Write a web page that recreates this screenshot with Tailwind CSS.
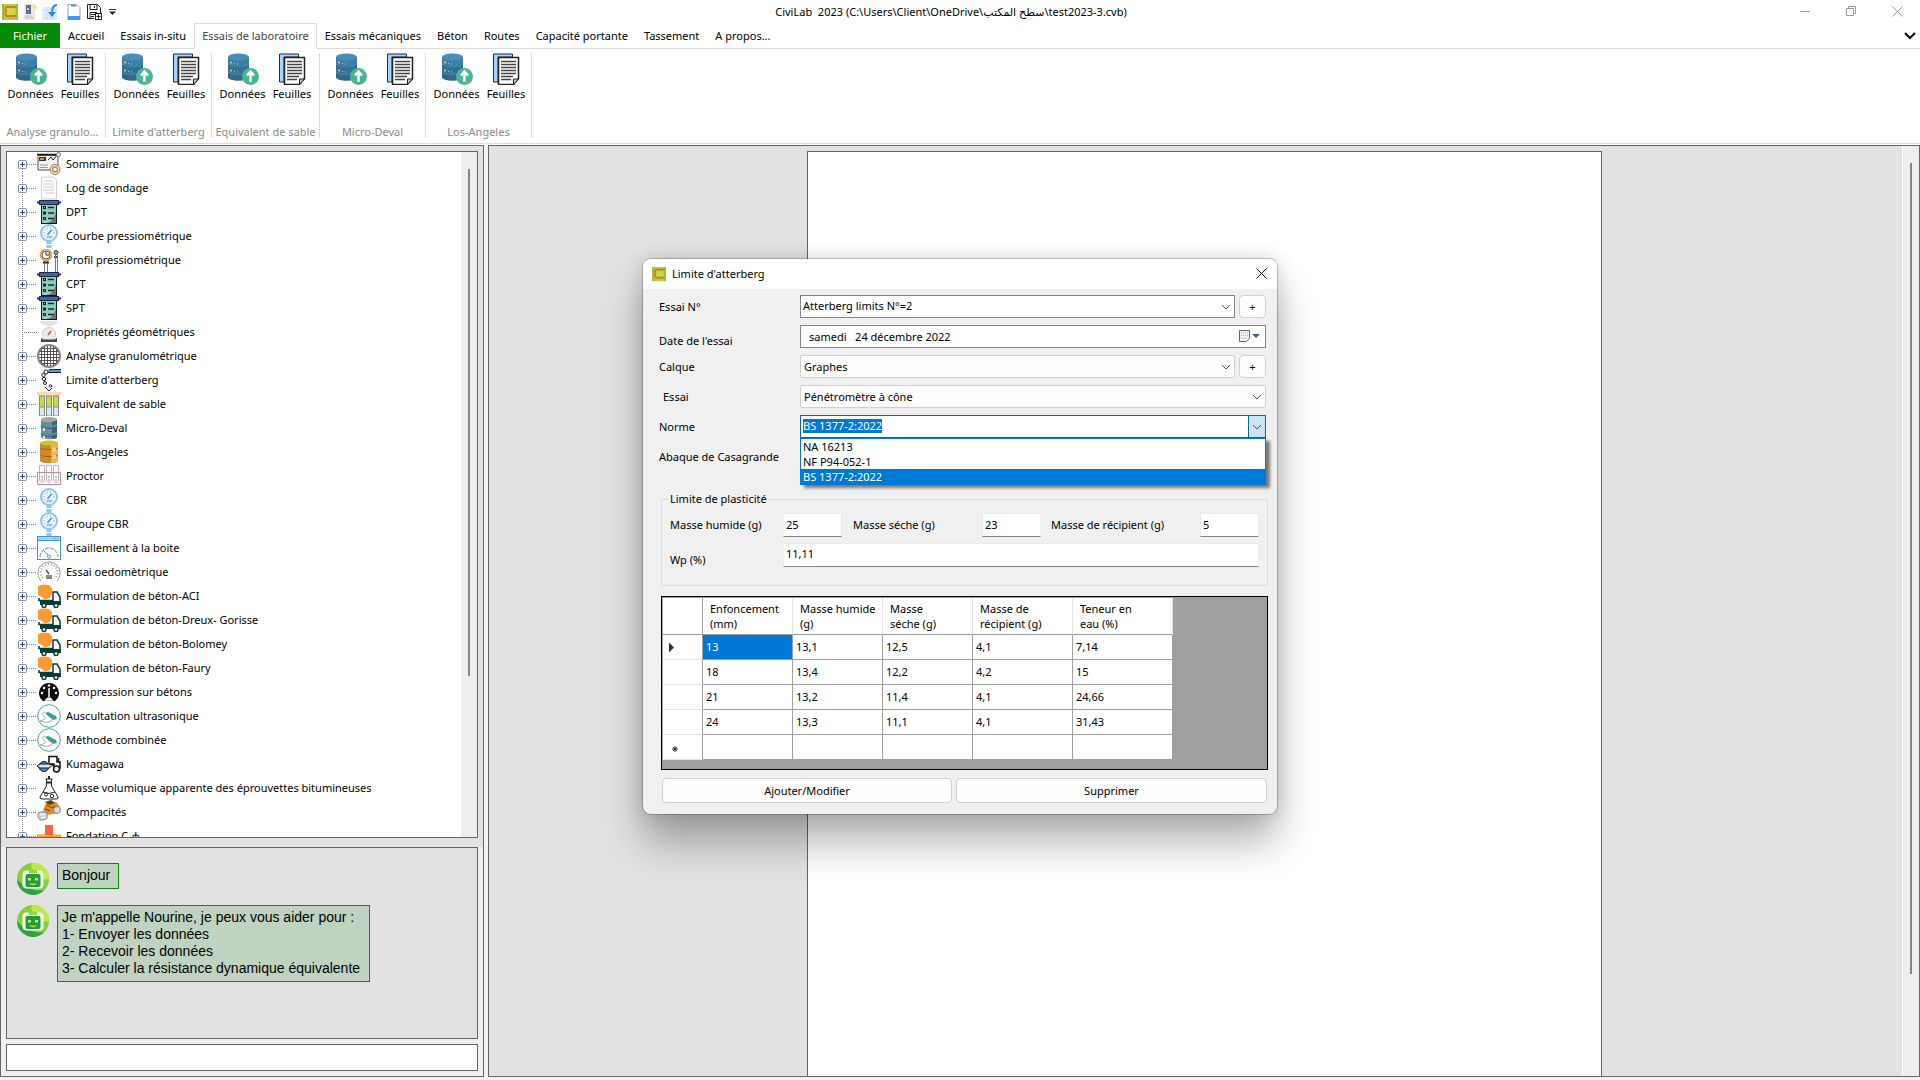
<!DOCTYPE html>
<html lang="fr">
<head>
<meta charset="utf-8">
<title>CiviLab 2023</title>
<script src="https://cdn.jsdelivr.net/npm/@tailwindcss/browser@4"></script>
</head>
<body class="flex h-screen flex-col overflow-hidden bg-white font-['Noto_Sans','DejaVu_Sans',sans-serif] text-[11px] leading-[14px] text-black">

<!-- Icon library -->
<svg class="hidden" aria-hidden="true">
  <symbol id="app" viewBox="0 0 16 16"><rect width="16" height="16" fill="#a6d62f"/><path d="M0 0h2v16H0zM14 0h2v16h-2z" fill="#8fc43a"/><path d="M5 4h8v7H5z" fill="#c8dc3c"/><path d="M14 3H5.500Q3.500 3 3.500 5v5q0 2 2 2H14" fill="none" stroke="#f2643c" stroke-width="2"/></symbol>
  <symbol id="data" viewBox="0 0 32 32"><path d="M1 4v20c0 2 4.500 3.500 10.500 3.500S22 26 22 24V4z" fill="#3e7fa8"/><path d="M1 12c3 3 18 3 21 0v6c-3 3-18 3-21 0z" fill="#35708f"/><path d="M1 20c3 3 18 3 21 0v4c0 2-4.500 3.500-10.500 3.500S1 26 1 24z" fill="#34688a"/><ellipse cx="11.500" cy="4" rx="10.500" ry="3.500" fill="#4a8db5"/><path d="M3 9.500h2M3 17.500h2" stroke="#e6c88a" stroke-width="1.500"/><path d="M7 10.500h1M10 11h1M7 18.500h1M10 19h1" stroke="#8fd0e8"/><circle cx="23.500" cy="23.500" r="8.500" fill="#4bb592"/><path d="M23.500 29v-9M20 22.500l3.500-4 3.500 4" fill="none" stroke="#fff" stroke-width="2.500"/></symbol>
  <symbol id="sheets" viewBox="0 0 32 32"><path d="M3.500 1h19v3H8v25H3.500z" fill="#a9d3fb" stroke="#1c2a3a"/><path d="M8.500 4.500h20v21l-5 6h-15z" fill="#fff" stroke="#222" stroke-width="1.500"/><path d="M11 8.500h15M11 11.500h15M11 14.500h15M11 17.500h15M11 20.500h15M11 23.500h12M11 26.500h10" stroke="#444" stroke-width="1.500"/><path d="M28.500 26h-5v5.500z" fill="#ccc" stroke="#222"/></symbol>

  <symbol id="t-first" viewBox="0 0 30 24"><path d="M15.500 17v7M20 12.500h10" stroke="#808080" stroke-dasharray="1 1"/><rect x="11.500" y="8.500" width="8" height="8" rx="1" fill="#fff" stroke="#919191"/><path d="M13 12.500h5M15.500 10v5" stroke="#2b4fa0"/></symbol>
  <symbol id="t-node" viewBox="0 0 30 24"><path d="M15.500 0v24M20 12.500h10" stroke="#808080" stroke-dasharray="1 1"/><rect x="11.500" y="8.500" width="8" height="8" rx="1" fill="#fff" stroke="#919191"/><path d="M13 12.500h5M15.500 10v5" stroke="#2b4fa0"/></symbol>
  <symbol id="t-leaf" viewBox="0 0 30 24"><path d="M15.500 0v24M17 12.500h13" stroke="#808080" stroke-dasharray="1 1"/></symbol>

  <symbol id="summary" viewBox="0 0 24 24"><path d="M1 3.500h20V18H1z" fill="#f2f2f2" stroke="#555"/><path d="M0 2.500h20" stroke="#111" stroke-width="1.500"/><rect x="2" y="5" width="7" height="4" fill="#333"/><rect x="3" y="6" width="4" height="2" fill="#e59a30"/><path d="M11 8l3-3 2 3 5-6" fill="none" stroke="#222"/><circle cx="21.500" cy="2.500" r="2" fill="#fff" stroke="#777"/><path d="M3 13h8M3 15.500h8" stroke="#999"/><circle cx="18" cy="17.500" r="5" fill="#eee" stroke="#777"/><circle cx="18" cy="17.500" r="2.500" fill="#fff" stroke="#c78b25" stroke-width="1.500"/></symbol>
  <symbol id="log" viewBox="0 0 24 24"><path d="M4.500 1h12l3 3v19h-15z" fill="#fbfbfb" stroke="#cfcfcf"/><path d="M7 5h9M6 8h11M7 11h10M6 14h11M9 17h8" stroke="#ccc"/></symbol>
  <symbol id="pen" viewBox="0 0 24 24"><rect x="4.500" y="4" width="15" height="19.500" fill="#8ccac4" stroke="#16191c"/><path d="M19 11v12h-9c5-1 8-5 9-12z" fill="#6e7479"/><path d="M0 1.500h2V0h20v1.500h2v2h-2V5H2V3.500H0z" fill="#1f2a3c"/><rect x="3" y="1" width="18" height="3" fill="#3c63a5"/><g fill="#f0a030" stroke="#222"><rect x="6.500" y="6.500" width="2" height="2"/><rect x="6.500" y="12" width="2" height="2"/><rect x="6.500" y="17.500" width="2" height="2"/></g><path d="M11 7.500h6M11 13h6M11 18.500h6" stroke="#1c2428" stroke-width="1.500"/></symbol>
  <symbol id="gauge" viewBox="0 0 24 24"><path d="M12 17v7" stroke="#8cc4f6" stroke-width="5" stroke-dasharray="3 1"/><circle cx="12" cy="9" r="8" fill="#eef7ff" stroke="#8cc4f6" stroke-width="2"/><circle cx="12" cy="9" r="5" fill="none" stroke="#3e94e6" stroke-dasharray="1 2"/><path d="M10.500 11l4-5" stroke="#3e94e6" stroke-width="1.500"/><path d="M10 13h5" stroke="#3e94e6"/></symbol>
  <symbol id="profil" viewBox="0 0 24 24"><path d="M7.500 13v11M10.500 13v11" stroke="#777"/><circle cx="9" cy="7" r="5.500" fill="#fff" stroke="#e49a2c" stroke-width="1.500"/><circle cx="9" cy="7" r="4" fill="none" stroke="#555"/><path d="M9 4v3h3" fill="none" stroke="#222"/><path d="M6 14.500h6" stroke="#333" stroke-width="2"/><circle cx="19" cy="4.500" r="2" fill="#aaa" stroke="#333"/><path d="M17 9h4" stroke="#444" stroke-width="2"/><path d="M18.500 7v17M20.500 7v17" stroke="#777"/></symbol>
  <symbol id="scale" viewBox="0 0 24 24"><path d="M3 1h18c-1 4-5 5-9 5S4 5 3 1z" fill="#e2e2e2"/><circle cx="12" cy="14" r="6.500" fill="#ececec" stroke="#ccc"/><path d="M4 18l3 1.500h10l3-1.500v4H4z" fill="#4a4447"/><path d="M11 15l3-4" stroke="#e8503a" stroke-width="1.500"/></symbol>
  <symbol id="sieve" viewBox="0 0 24 24"><circle cx="12" cy="12" r="11" fill="#fff" stroke="#8e7f83" stroke-width="2"/><path d="M4.500 5v14M7.500 3v18M10.500 2v20M13.500 2v20M16.500 3v18M19.500 5v14M5 4.500h14M3 7.500h18M2 10.500h20M2 13.500h20M3 16.500h18M5 19.500h14" stroke="#333" stroke-width="0.800"/></symbol>
  <symbol id="limit" viewBox="0 0 24 24"><path d="M12 1.500h12M9 4.500h15" stroke="#222"/><path d="M11 3h13" stroke="#5a9bd8" stroke-width="2"/><g fill="#fff" stroke="#222"><circle cx="9" cy="4" r="2"/><circle cx="6.500" cy="7" r="1.700"/><circle cx="7" cy="11" r="1.700"/><circle cx="8" cy="15" r="1.500"/><circle cx="13.500" cy="18" r="1.300"/><path d="M8 19l4 4 3-3"/></g></symbol>
  <symbol id="tubes" viewBox="0 0 24 24"><path d="M0 0h24v3l-3 1H3L0 3z" fill="#f3d9b8"/><g fill="#c7dd3a" stroke="#888"><rect x="2.500" y="4" width="5" height="13"/><rect x="9.500" y="4" width="5" height="13"/><rect x="16.500" y="4" width="5" height="13"/></g><g fill="#d5e9f7" stroke="#888"><path d="M2.500 15h5v9h-5zM9.500 15h5v9h-5zM16.500 15h5v9h-5z"/></g></symbol>
  <symbol id="drum" viewBox="0 0 24 24"><path d="M4 3v18c0 3 16 3 16 0V3z" fill="#85898d"/><path d="M15 4v19c3 0 5-1 5-2V3z" fill="#55595d"/><ellipse cx="12" cy="3.500" rx="8" ry="2.500" fill="#a3a6a9"/><path d="M4 9c3 2 13 2 16 0M4 17c3 2 13 2 16 0" fill="none" stroke="#2aa0ae" stroke-width="2.500"/><path d="M4 11c3 2 13 2 16 0M4 19c3 2 13 2 16 0" fill="none" stroke="#2b5c96"/><path d="M7 12v3M7 20v3" stroke="#ddd" stroke-width="2"/></symbol>
  <symbol id="barrel" viewBox="0 0 24 24"><path d="M3 3v18c2 3 16 3 18 0V3z" fill="#cf8a28"/><path d="M14 4v19c4 0 6-1 7-2V3z" fill="#f2b04e"/><path d="M3 8c3 2 15 2 18 0M3 15c3 2 15 2 18 0" fill="none" stroke="#a8641a"/><path d="M15 8h4v4h-4zM15 15h4v4h-4z" fill="#f8c68d"/><ellipse cx="12" cy="3" rx="9" ry="2.500" fill="#c9c436"/></symbol>
  <symbol id="proctor" viewBox="0 0 24 24"><g fill="#fff" stroke="#bbb"><path d="M2.500 1.500h5v15q-2.500 4-5 0zM9.500 1.500h5v15q-2.500 4-5 0zM16.500 1.500h5v15q-2.500 4-5 0z"/></g><path d="M.5 8.500h23v12H.500z" fill="none" stroke="#c08aa6"/><path d="M4 13h2M11 13h2M18 13h2M4 16h2M11 16h2M18 16h2" stroke="#888"/></symbol>
  <symbol id="shear" viewBox="0 0 24 24"><rect x=".5" y=".5" width="23" height="23" fill="#fff" stroke="#3e94e6"/><path d="M1 1h22v3.500H1z" fill="#a6d2f8"/><path d="M0 4.500h24" stroke="#3e94e6"/><path d="M16 2.500h6" stroke="#3e94e6" stroke-dasharray="1 1"/><path d="M3 21a9 9 0 0 1 18 0" fill="none" stroke="#40a0c0" stroke-dasharray="4 1"/><path d="M6 14l5 5" stroke="#3e94e6"/><circle cx="12" cy="20.500" r="1.500" fill="#fff" stroke="#3e94e6"/></symbol>
  <symbol id="oedo" viewBox="0 0 24 24"><path d="M4 21a11.200 11.200 0 1 1 16 0" fill="#fff" stroke="#999"/><path d="M5.500 18a8.500 8.500 0 1 1 13 0" fill="none" stroke="#999" stroke-width="2" stroke-dasharray="1 2"/><path d="M9 10l3 4" stroke="#555" stroke-width="1.500"/><path d="M9 15h6v4H9z" fill="#8a8a8a"/></symbol>
  <symbol id="truck" viewBox="0 0 24 24"><path d="M2 14v2.500h14V8h4l3 5v4" fill="#fff" stroke="#0b3a3a" stroke-width="1.500"/><path d="M3 17h21v4H3z" fill="#0b3a3a"/><circle cx="7" cy="21.500" r="2" fill="#fff" stroke="#0b3a3a" stroke-width="1.500"/><circle cx="19" cy="21.500" r="2" fill="#fff" stroke="#0b3a3a" stroke-width="1.500"/><path d="M1 2L6 .500l6 .500 3 3v5l-2 5-5 1.500L5 13 1 11z" fill="#ff9933"/></symbol>
  <symbol id="press" viewBox="0 0 24 24"><path d="M6 21A10 10 0 1 1 18 21z" fill="#0c0c0c"/><path d="M12 8v9M9 20q3-4 6 0z" stroke="#fff" stroke-width="1.500" fill="#fff"/><g fill="#fff"><circle cx="5" cy="13" r="1.200"/><circle cx="7" cy="8" r="1.200"/><circle cx="12" cy="5.500" r="1.200"/><circle cx="17" cy="8" r="1.200"/><circle cx="19" cy="13" r="1.200"/></g></symbol>
  <symbol id="ultra" viewBox="0 0 24 24"><circle cx="12" cy="12" r="11.300" fill="#fff" stroke="#46a39a"/><path d="M8 9l3-1 8 4 1 3-4 1-5-4z" fill="#3f9c94"/><path d="M8 8Q3 9 7 12t-4 5q9 3 12-1" fill="none" stroke="#aaa"/></symbol>
  <symbol id="roller" viewBox="0 0 24 24"><circle cx="7" cy="14.500" r="5" fill="#4a8edc" stroke="#111"/><path d="M0 14l3-2h9l4 1-4 3H3z" fill="#cfe3fa" stroke="#111"/><path d="M12 11V4.500h8V10h3v6h-6v-4h-5" fill="#fff" stroke="#111" stroke-width="1.500"/><path d="M21.500 6v4" stroke="#111" stroke-width="1.500"/><circle cx="19.500" cy="17" r="3" fill="#fff" stroke="#111" stroke-width="1.500"/></symbol>
  <symbol id="flask" viewBox="0 0 24 24"><path d="M8.500 3h7M9.500 3v7L3 21q-.5 2 2 2h14q2.500 0 2-2L14.500 10V3" fill="#fff" stroke="#222"/><path d="M12 0v3M9.500 6.500h5" stroke="#222" stroke-width="2"/><path d="M6 16q6 3 12 0" fill="none" stroke="#222"/><circle cx="9" cy="18.500" r="1.500" fill="none" stroke="#222"/><circle cx="15" cy="20" r="1.700" fill="none" stroke="#222"/></symbol>
  <symbol id="compact" viewBox="0 0 24 24"><path d="M9 3l10-1 4 5v5l-6 2-8 1-3-5z" fill="#e08c20"/><path d="M8 2l6-2 4 3-5 2z" fill="#5a3c1c"/><path d="M10 5l5 3 4-2M8 9l5 2" stroke="#6b3c0c" fill="none"/><circle cx="20" cy="10" r="3.500" fill="#d8d8d8" stroke="#888"/><path d="M1 13q4-3 9 0v5q-3 3-7 2-3-3-2-7z" fill="#cfd4d6" stroke="#8c8c84"/><path d="M3 15l6-1M4 18l5-1" stroke="#fff"/></symbol>
  <symbol id="found" viewBox="0 0 24 24"><path d="M0 10.500h24v13.500H0z" fill="#ffa03c"/><path d="M8 1h8v10H8z" fill="#ff6038"/></symbol>

  <symbol id="bot" viewBox="0 0 32 32"><circle cx="16" cy="16" r="16" fill="#86d03c"/><path d="M16 0a16 16 0 0 1 16 16c-6 2-9-2-12-6s-9-5-4-10z" fill="#bdea48"/><path d="M0 16a16 16 0 0 0 27 11.500C18 28 8 26 0 16z" fill="#2fa044"/><rect x="5.500" y="7.500" width="21" height="18" rx="4" fill="#f4fbe6"/><rect x="12" y="7" width="8" height="3" fill="#9ad63c"/><rect x="8.500" y="11" width="15" height="13" rx="2" fill="#249a44"/><path d="M11 15h3v2.500h-3zM18 15h3v2.500h-3z" fill="#c6ec50"/><path d="M13 20.500q3 2 6 0" fill="none" stroke="#c6ec50" stroke-width="1.500"/></symbol>
  <symbol id="chev" viewBox="0 0 10 10"><path d="M1 3l4 4 4-4" fill="none" stroke="#555"/></symbol>
</svg>

<!-- Title bar -->
<header class="flex h-[23px] shrink-0 items-center">
  <div class="flex w-[138px] items-center gap-1 pl-[2px]">
    <svg class="size-4"><use href="#app"/></svg>
    <button type="button" aria-label="Nouveau"><svg class="size-4" viewBox="0 0 16 16"><path d="M2 0h11v16H1z" fill="#e9e9ea"/><rect x="4" y="1" width="5" height="9" fill="#5b6d90"/><rect x="5" y="4" width="2" height="2" fill="#e8c9a0"/><path d="M3 12h7M3 14h9" stroke="#bbb"/><circle cx="13" cy="3" r="2" fill="#f4ee4e"/></svg></button>
    <button type="button" aria-label="Ouvrir"><svg class="size-4" viewBox="0 0 16 16"><path d="M1 3h14v13H0z" fill="#d8ebfa"/><path d="M0 6h16M5 6v10M11 6v10" stroke="#c3def4"/><path d="M15 1q-5 0-5 8" fill="none" stroke="#2f8be6" stroke-width="2"/><path d="M6 8h8l-4 5z" fill="#2f8be6"/></svg></button>
    <button type="button" class="ml-1" aria-label="Enregistrer"><svg class="size-4" viewBox="0 0 16 16"><path d="M2 .5h9l3 3V16H2z" fill="#fff" stroke="#8aa"/><path d="M5 1h5v1.500H5zM2 12h12v4H2z" fill="#3e9af0"/></svg></button>
    <button type="button" aria-label="Enregistrer sous"><svg class="size-4" viewBox="0 0 16 16"><path d="M8 14.500H1.500V.5h10l3 3V9M4 1v4.500h7V1M8.500 2v2M4 14V8.500h7M5 10.500h4M5 12.500h3" fill="none" stroke="#222"/><rect x="9.500" y="9.500" width="6" height="6" fill="#fff" stroke="#222"/><path d="M10.500 12.500h4M12.500 10.500v4" stroke="#222"/></svg></button>
    <button type="button" aria-label="Personnaliser"><svg class="h-4 w-3" viewBox="0 0 12 16"><path d="M3 5.500h7" stroke="#333"/><path d="M3 7.500h7L6.500 11z" fill="#222"/></svg></button>
  </div>
  <h1 class="flex-1 pr-[18px] text-center font-normal whitespace-pre">CiviLab  2023 (C:\Users\Client\OneDrive\سطح المكتب\test2023-3.cvb)</h1>
  <div class="flex text-[#9a9a9a]">
    <button type="button" class="flex w-[46px] justify-center" aria-label="Réduire"><svg class="size-[11px]" viewBox="0 0 11 11"><path d="M0 5.500h10" stroke="currentColor"/></svg></button>
    <button type="button" class="flex w-[46px] justify-center" aria-label="Restaurer"><svg class="size-[11px]" viewBox="0 0 11 11"><path d="M.5 2.500h7v7h-7zM2.500 2.500v-2h7v7h-2" fill="none" stroke="currentColor"/></svg></button>
    <button type="button" class="flex w-[46px] justify-center" aria-label="Fermer"><svg class="size-[11px]" viewBox="0 0 11 11"><path d="M.5.5l10 10M10.500.5l-10 10" stroke="currentColor"/></svg></button>
  </div>
</header>

<!-- Ribbon tabs -->
<nav class="flex h-[26px] shrink-0">
  <button type="button" class="mb-px w-[60px] bg-[#058a05] text-white">Fichier</button>
  <button type="button" class="border-b border-[#dcdcdc] px-2">Accueil</button>
  <button type="button" class="border-b border-[#dcdcdc] px-2">Essais in-situ</button>
  <button type="button" class="border border-[#dcdcdc] border-b-white px-[7px] text-[#444]">Essais de laboratoire</button>
  <button type="button" class="border-b border-[#dcdcdc] px-2">Essais mécaniques</button>
  <button type="button" class="border-b border-[#dcdcdc] px-2">Béton</button>
  <button type="button" class="border-b border-[#dcdcdc] px-2">Routes</button>
  <button type="button" class="border-b border-[#dcdcdc] px-2">Capacité portante</button>
  <button type="button" class="border-b border-[#dcdcdc] px-2">Tassement</button>
  <button type="button" class="border-b border-[#dcdcdc] px-2">A propos...</button>
  <div class="flex flex-1 items-center justify-end border-b border-[#dcdcdc] pr-1">
    <button type="button" aria-label="Réduire le ruban"><svg class="h-2 w-3" viewBox="0 0 12 8"><path d="M1 1l5 5 5-5" fill="none" stroke="#000" stroke-width="2"/></svg></button>
  </div>
</nav>

<!-- Ribbon -->
<div id="ribbon" class="mb-px flex h-[95px] shrink-0 border-b border-[#dcdcdc] pt-1 pb-[5px]"></div>

<main class="flex min-h-0 flex-1 gap-1 bg-[#f3f3f3] pb-[3px]">
  <!-- Left column -->
  <aside class="flex w-[484px] shrink-0 flex-col border border-[#646464] bg-[#f0f0f0]">
    <div class="flex min-h-0 flex-1 bg-[#e2e2e2] px-[5px] pt-[5px] pb-[9px]">
      <div class="flex min-h-0 flex-1 overflow-hidden border border-[#646464] bg-white">
        <ul id="tree" role="tree" class="min-w-0 flex-1 overflow-hidden"></ul>
        <div class="w-4 shrink-0 bg-[#eeeeee] pt-[17px] pl-[7px]"><div class="h-[507px] w-[2px] bg-[#858585]"></div></div>
      </div>
    </div>
    <div class="mx-[5px] flex h-[192px] shrink-0 flex-col gap-[10px] border border-[#646464] bg-[#e2e2e2] py-[15px] pl-[10px] font-['Liberation_Sans',sans-serif] text-[14px] leading-[17px]">
      <div class="flex items-start gap-2">
        <svg class="size-8"><use href="#bot"/></svg>
        <p class="border border-[#0a8a14] bg-[#c0d3c0] pt-[3px] pr-2 pb-[4px] pl-1">Bonjour</p>
      </div>
      <div class="flex items-start gap-2">
        <svg class="size-8"><use href="#bot"/></svg>
        <p class="border border-[#0a8a14] bg-[#c0d3c0] pt-[3px] pr-[9px] pb-[4px] pl-1">Je m'appelle Nourine, je peux vous aider pour :<br>1- Envoyer les données<br>2- Recevoir les données<br>3- Calculer la résistance dynamique équivalente</p>
      </div>
    </div>
    <input type="text" aria-label="Message" class="mx-[5px] my-[5px] h-[27px] border border-[#646464] bg-white px-1 outline-none">
  </aside>

  <!-- Document viewer -->
  <section class="flex min-w-0 flex-1 border border-[#646464] bg-[#e2e2e2]">
    <div class="flex min-w-0 flex-1 justify-center pt-[5px] pl-[18px]">
      <div class="w-[795px] border border-b-0 border-[#646464] bg-white"></div>
    </div>
    <div class="w-[17px] shrink-0 border-l border-white bg-[#eeeeee] pt-[17px] pl-[7px]"><div class="h-[811px] w-[2px] bg-[#858585]"></div></div>
  </section>
</main>

<!-- Dialog window over the workspace -->
<div class="absolute inset-x-0 top-[259px] flex justify-center">
  <div role="dialog" aria-labelledby="dlg-title" class="w-[634px] rounded-lg bg-[#f0f0f0] pb-[11px] shadow-[0_0_0_1px_rgba(0,0,0,0.2),0_28px_40px_rgba(0,0,0,0.3),0_0_20px_rgba(0,0,0,0.15)]">
    <div class="flex h-[30px] items-center rounded-t-lg bg-white pr-[10px] pb-px pl-2">
      <svg class="mr-[5px] h-[14px] w-4" preserveAspectRatio="none"><use href="#app"/></svg>
      <h2 id="dlg-title" class="flex-1">Limite d'atterberg</h2>
      <button type="button" aria-label="Fermer la boîte"><svg class="size-[11px]" viewBox="0 0 11 11"><path d="M.5.5l10 10M10.500.5l-10 10" stroke="#111"/></svg></button>
    </div>

    <form class="flex flex-col gap-[7px] pt-[6px] pr-[11px] pl-4" onsubmit="return false">
      <div class="flex h-[23px] items-center gap-1">
        <label for="essaino" class="w-[137px]">Essai N°</label>
        <div class="relative h-full flex-1">
          <select id="essaino" class="size-full appearance-none border border-[#858585] bg-white px-[2px] pb-[2px]"><option>Atterberg limits N°=2</option></select>
          <svg class="pointer-events-none absolute top-[7px] right-1 size-[10px]"><use href="#chev"/></svg>
        </div>
        <button type="button" class="h-full w-[27px] rounded border border-[#d0d0d0] bg-[#fdfdfd]">+</button>
      </div>
      <div class="flex h-[23px] items-end gap-1">
        <label for="date" class="w-[137px]">Date de l'essai</label>
        <div class="relative h-full flex-1">
          <input id="date" type="text" value="samedi   24 décembre 2022" class="size-full border border-[#858585] bg-white px-2 outline-none">
          <svg class="pointer-events-none absolute top-[3px] right-1 h-4 w-6" viewBox="0 0 24 16"><path d="M1.500 2.500h10v8l-3 3h-7z" fill="#f2f2f2" stroke="#666"/><path d="M3 5h7M3 7.500h7M3 10h5" stroke="#aaa" stroke-dasharray="1 1"/><path d="M14 6h8l-4 4z" fill="#3f5f84"/></svg>
        </div>
      </div>
      <div class="flex h-[23px] items-center gap-1">
        <label for="calque" class="w-[137px]">Calque</label>
        <div class="relative h-full flex-1">
          <select id="calque" class="size-full appearance-none rounded-xs border border-[#d0d0d0] bg-[#fdfdfd] px-[3px]"><option>Graphes</option></select>
          <svg class="pointer-events-none absolute top-[7px] right-1 size-[10px]"><use href="#chev"/></svg>
        </div>
        <button type="button" class="h-full w-[27px] rounded border border-[#d0d0d0] bg-[#fdfdfd]">+</button>
      </div>
      <div class="flex h-[23px] items-center gap-1">
        <label for="essai" class="w-[137px] pl-1">Essai</label>
        <div class="relative h-full flex-1">
          <select id="essai" class="size-full appearance-none rounded-xs border border-[#d0d0d0] bg-[#fdfdfd] px-[3px]"><option>Pénétromètre à cône</option></select>
          <svg class="pointer-events-none absolute top-[7px] right-1 size-[10px]"><use href="#chev"/></svg>
        </div>
      </div>
      <div class="flex h-[23px] items-center gap-1">
        <label for="norme" class="w-[137px]">Norme</label>
        <div class="relative flex h-full flex-1 border border-[#0067c0] bg-white">
          <input id="norme" role="combobox" aria-expanded="true" aria-controls="normes" type="text" value="BS 1377-2:2022" class="min-w-0 flex-1 px-[2px] pb-[2px] outline-none selection:bg-[#0078d7] selection:text-white">
          <button type="button" aria-label="Dérouler" class="flex w-[17px] items-center justify-center border-l border-[#0067c0] bg-[#cce4f7]"><svg class="size-[10px]"><use href="#chev"/></svg></button>
          <ul id="normes" role="listbox" class="absolute top-[22px] -right-px -left-px z-10 border border-[#0078d7] bg-white leading-[15px] shadow-[4px_3px_3px_rgba(0,0,0,0.5)]">
            <li role="option" class="px-[2px]">NA 16213</li>
            <li role="option" class="px-[2px]">NF P94-052-1</li>
            <li role="option" aria-selected="true" class="bg-[#0078d7] px-[2px] text-white">BS 1377-2:2022</li>
          </ul>
        </div>
      </div>
      <div class="flex h-[23px] items-center"><span>Abaque de Casagrande</span></div>
    </form>

    <fieldset class="mt-[24px] mr-[9px] ml-[18px] border border-[#dcdcdc] pr-2 pb-[18px] pl-[2px]">
      <legend class="ml-1 px-[2px]">Limite de plasticité</legend>
      <div class="flex items-center pt-[7px] pl-[6px]">
        <label for="mh" class="w-[113px]">Masse humide (g)</label>
        <input id="mh" type="text" value="25" class="h-[24px] w-[59px] border border-[#ececec] border-b-[#858585] bg-white px-[2px] pb-[2px]">
        <label for="ms" class="w-[140px] pl-[11px]">Masse séche (g)</label>
        <input id="ms" type="text" value="23" class="h-[24px] w-[59px] border border-[#ececec] border-b-[#858585] bg-white px-[2px] pb-[2px]">
        <label for="mr" class="flex-1 pl-[10px]">Masse de récipient (g)</label>
        <input id="mr" type="text" value="5" class="h-[24px] w-[59px] border border-[#ececec] border-b-[#858585] bg-white px-[2px] pb-[2px]">
      </div>
      <div class="flex items-end pt-[6px] pl-[6px]">
        <label for="wp" class="w-[113px]">Wp (%)</label>
        <input id="wp" type="text" value="11,11" class="h-[24px] flex-1 border border-[#ececec] border-b-[#858585] bg-white px-[2px] pb-[3px]">
      </div>
    </fieldset>

    <div class="mt-[10px] mr-[9px] ml-[18px] border border-black bg-[#a0a0a0] pt-px pb-[9px] pl-px">
      <table class="w-[510px] table-fixed border-separate border-spacing-0 bg-white text-left">
        <colgroup><col class="w-[40px]"><col class="w-[90px]"><col class="w-[90px]"><col class="w-[90px]"><col class="w-[100px]"><col class="w-[100px]"></colgroup>
        <thead class="leading-[15px]">
          <tr class="h-[37px]">
            <td class="border-r border-b border-[#a0a0a0]"></td>
            <th class="border-r border-b border-[#e5e5e5] border-b-[#a0a0a0] pl-[7px] font-normal">Enfoncement<br>(mm)</th>
            <th class="border-r border-b border-[#e5e5e5] border-b-[#a0a0a0] pl-[7px] font-normal whitespace-nowrap">Masse humide<br>(g)</th>
            <th class="border-r border-b border-[#e5e5e5] border-b-[#a0a0a0] pl-[7px] font-normal">Masse<br>séche (g)</th>
            <th class="border-r border-b border-[#e5e5e5] border-b-[#a0a0a0] pl-[7px] font-normal">Masse de<br>récipient (g)</th>
            <th class="border-r border-b border-[#e5e5e5] border-b-[#a0a0a0] pl-[7px] font-normal">Teneur en<br>eau (%)</th>
          </tr>
        </thead>
        <tbody id="rows"></tbody>
      </table>
    </div>

    <div class="mt-2 mr-[10px] ml-[19px] flex gap-1">
      <button type="button" class="h-[25px] w-[290px] rounded border border-[#d0d0d0] bg-[#fdfdfd]">Ajouter/Modifier</button>
      <button type="button" class="h-[25px] flex-1 rounded border border-[#d0d0d0] bg-[#fdfdfd]">Supprimer</button>
    </div>
  </div>
</div>

<script>
  // Ribbon groups: title and width class
  const groups = [["Analyse granulo...", "w-[106px]"], ["Limite d'atterberg", "w-[106px]"], ["Equivalent de sable", "w-[108px]"], ["Micro-Deval", "w-[106px]"], ["Los-Angeles", "w-[106px]"]];
  document.getElementById("ribbon").innerHTML = groups.map(([title, width]) => `
    <div class="flex ${width} flex-col justify-between border-r border-[#dcdcdc]">
      <div class="flex pl-1">
        <button type="button" class="flex w-[53px] flex-col items-center"><svg class="size-8"><use href="#data"/></svg><span class="leading-[18px]">Données</span></button>
        <button type="button" class="flex w-[46px] flex-col items-center"><svg class="size-8"><use href="#sheets"/></svg><span class="leading-[18px]">Feuilles</span></button>
      </div>
      <div class="text-center leading-[12px] whitespace-nowrap text-[#8a8a8a]">${title}</div>
    </div>`).join("");

  // Project tree: icon and label
  const nodes = [["summary", "Sommaire"], ["log", "Log de sondage"], ["pen", "DPT"], ["gauge", "Courbe pressiométrique"], ["profil", "Profil pressiométrique"], ["pen", "CPT"], ["pen", "SPT"], ["scale", "Propriétés géométriques"], ["sieve", "Analyse granulométrique"], ["limit", "Limite d'atterberg"], ["tubes", "Equivalent de sable"], ["drum", "Micro-Deval"], ["barrel", "Los-Angeles"], ["proctor", "Proctor"], ["gauge", "CBR"], ["gauge", "Groupe CBR"], ["shear", "Cisaillement à la boite"], ["oedo", "Essai oedomètrique"], ["truck", "Formulation de béton-ACI"], ["truck", "Formulation de béton-Dreux- Gorisse"], ["truck", "Formulation de béton-Bolomey"], ["truck", "Formulation de béton-Faury"], ["press", "Compression sur bétons"], ["ultra", "Auscultation ultrasonique"], ["ultra", "Méthode combinée"], ["roller", "Kumagawa"], ["flask", "Masse volumique apparente des éprouvettes bitumineuses"], ["compact", "Compacités"], ["found", "Fondation C-φ"]];
  document.getElementById("tree").innerHTML = nodes.map(([icon, label], i) => `
    <li role="treeitem" class="flex h-6 items-center">
      <svg class="h-6 w-[30px]"><use href="#${i === 0 ? "t-first" : icon === "scale" ? "t-leaf" : "t-node"}"/></svg>
      <svg class="mr-[5px] size-6"><use href="#${icon}"/></svg>
      <span>${label}</span>
    </li>`).join("");

  // Measurements grid
  const marks = ['<svg class="ml-[6px] h-3 w-[6px]" viewBox="0 0 6 12"><path d="M0 1.500L5 6.500 0 11.500z" fill="#333"/></svg>', "", "", "", '<svg class="mt-1 ml-2 size-2" viewBox="0 0 8 8"><path d="M4 1v6M1 4h6M2 2l4 4M6 2L2 6" stroke="#333"/></svg>'];
  const data = [["13", "13,1", "12,5", "4,1", "7,14"], ["18", "13,4", "12,2", "4,2", "15"], ["21", "13,2", "11,4", "4,1", "24,66"], ["24", "13,3", "11,1", "4,1", "31,43"], ["", "", "", "", ""]];
  document.getElementById("rows").innerHTML = data.map((row, r) => `
    <tr class="h-[25px]"><td class="border-r border-b border-[#a0a0a0] border-b-[#e5e5e5]">${marks[r]}</td>${row.map((v, c) => `<td class="border-r border-b border-[#a0a0a0] pl-[3px] ${r === 0 && c === 0 ? "bg-[#0078d7] text-white" : "bg-white"}">${v}</td>`).join("")}</tr>`).join("");

  const norme = document.getElementById("norme");
  norme.focus();
  norme.select();
</script>
</body>
</html>
